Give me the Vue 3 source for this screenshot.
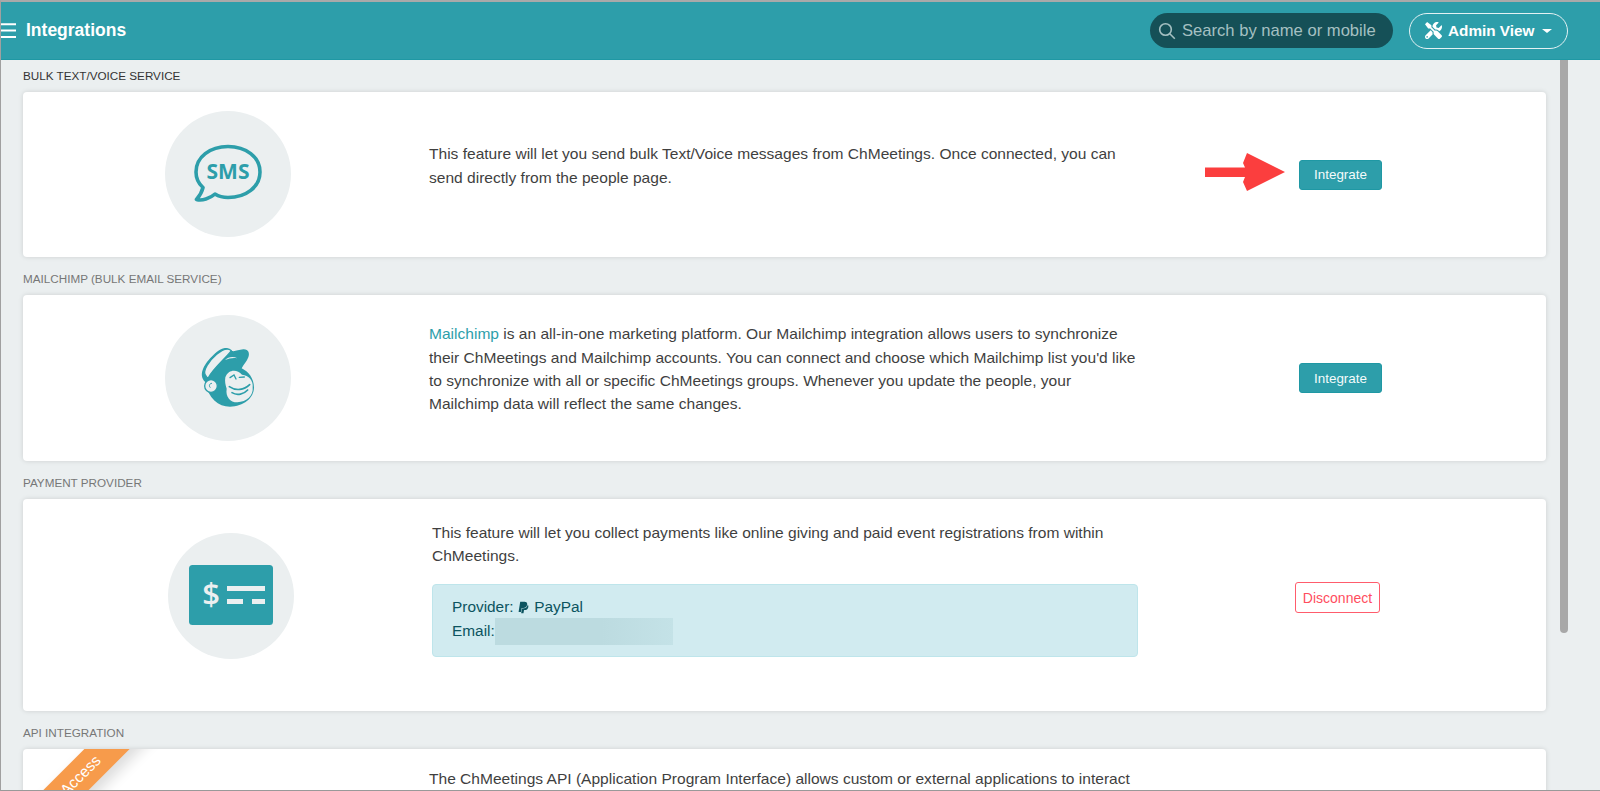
<script setup>
const tools = "M501.1 395.7L384 278.6c-23.1-23.1-57.6-27.6-85.4-13.9L192 158.1V96L64 0 0 64l96 128h62.1l106.6 106.6c-13.6 27.8-9.2 62.3 13.9 85.4l117.1 117.1c14.6 14.6 38.2 14.6 52.7 0l52.7-52.7c14.5-14.6 14.5-38.2-.1-52.7zM331.7 225c28.3 0 54.9 11 74.9 31l19.4 19.4c15.8-6.9 30.8-16.5 43.8-29.5 37.1-37.1 49.7-89.3 37.9-136.7-2.2-9-13.5-12.1-20.1-5.5l-74.4 74.4-67.9-11.3L334 98.9l74.4-74.4c6.6-6.6 3.4-17.9-5.7-20.2-47.4-11.7-99.6.9-136.6 37.9-28.5 28.5-41.9 66.1-41.2 103.6l82.1 82.1c8.1-1.9 16.5-2.9 24.7-2.9zm-103.9 82l-56.7-56.7L18.7 402.8c-25 25-25 65.5 0 90.5s65.5 25 90.5 0l123.6-123.6c-7.6-19.9-9.9-41.6-5-62.7zM64 472c-13.2 0-24-10.8-24-24 0-13.3 10.7-24 24-24s24 10.7 24 24c0 13.2-10.7 24-24 24z";
const paypal = "M111.4 295.9c-3.5 19.2-17.4 108.7-21.5 134-.3 1.8-1 2.5-3 2.5H12.3c-7.6 0-13.1-6.6-12.1-13.9L58.8 46.6c1.5-9.6 10.1-16.9 20-16.9 152.3 0 165.1-3.7 204 11.4 60.1 23.3 65.6 79.5 44 140.3-21.5 62.6-72.5 89.5-140.1 90.3-43.4.7-69.5-7-75.3 24.2zM357.1 152c-1.8-1.3-2.5-1.8-3 1.3-2 11.4-5.1 22.5-8.8 33.6-39.9 113.8-150.5 103.9-204.5 103.9-6.1 0-10.1 3.3-10.9 9.4-22.6 140.4-27.1 169.7-27.1 169.7-1 7.1 3.5 12.9 10.6 12.9h63.5c8.6 0 15.7-6.3 17.4-14.9.7-5.4-1.1 6.1 14.4-91.3 4.6-22 14.3-19.7 29.3-19.7 71 0 126.4-28.8 142.9-112.3 6.5-34.8 4.6-71.4-23.8-92.6z";
</script>

<template>
  <div class="page">
    <header class="topbar">
      <div class="brand">
        <svg class="burger" width="16" height="16" viewBox="0 0 16 16"><path d="M0 1.2h15M0 7.6h15M0 14h15" stroke="#fff" stroke-width="2" /></svg>
        <h1>Integrations</h1>
      </div>
      <div class="tools">
        <div class="search">
          <svg width="18" height="18" viewBox="0 0 18 18" fill="none" stroke="#a5c0c2" stroke-width="1.6"><circle cx="7.5" cy="7.5" r="5.8" /><path d="M11.8 11.8l5 5" /></svg>
          <span>Search by name or mobile</span>
        </div>
        <button class="admin">
          <svg width="17" height="17" viewBox="0 0 512 512" fill="#fff"><path :d="tools" /></svg>
          <span>Admin View</span>
          <i class="caret"></i>
        </button>
      </div>
    </header>

    <main class="content">
      <div class="scrollthumb"></div>

      <div class="label dark">BULK TEXT/VOICE SERVICE</div>
      <section class="card row">
        <div class="circle">
          <svg width="126" height="126" viewBox="0 0 126 126">
            <path d="M63 35.5C45 35.5 31 46 31 61C31 68 34 73 38 76.5C37 81 34.5 85 31.5 88.5C37 90 45 87.5 50 83C54 85.5 58 86.5 63 86.5C81 86.5 95 76 95 61C95 46 81 35.5 63 35.5Z" fill="none" stroke="#2d9eaa" stroke-width="3.6" stroke-linejoin="round" />
            <text x="63" y="68" class="sms">SMS</text>
          </svg>
        </div>
        <p class="desc">This feature will let you send bulk Text/Voice messages from ChMeetings. Once connected, you can send directly from the people page.</p>
        <div class="action with-arrow">
          <svg width="80" height="38" viewBox="0 0 80 38"><path d="M0 14.5H40L38 10L42 0L80 19L42 38L38 29L40 24H0Z" fill="#fb3e3e" /></svg>
          <button class="btn">Integrate</button>
        </div>
      </section>

      <div class="label">MAILCHIMP (BULK EMAIL SERVICE)</div>
      <section class="card row tall">
        <div class="circle">
          <svg width="126" height="126" viewBox="45 45 378 378">
            <path d="M165 245C145 225 160 195 185 170C205 150 225 135 240 150C250 158 262 150 280 148C295 147 300 160 295 172C290 185 282 192 275 205C295 215 312 235 312 262C312 295 280 320 240 320C205 320 175 295 165 245Z" fill="#2d9eaa" />
            <path d="M168 228C154 212 180 180 200 163C215 150 232 141 244 152C232 170 190 205 176 232C173 235 170 232 168 228Z" fill="#ebeff0" stroke="#2d9eaa" stroke-width="4" stroke-linejoin="round" />
            <circle cx="183" cy="258" r="19" fill="#ebeff0" stroke="#2d9eaa" stroke-width="4" />
            <path d="M186 250C178 250 176 258 181 263" fill="none" stroke="#2d9eaa" stroke-width="3" />
            <path d="M226 232C236 206 262 208 276 224C296 226 311 242 308 262C311 286 290 306 262 307C240 307 226 290 230 266C226 254 224 244 226 232Z" fill="#ebeff0" />
            <path d="M238 260C258 274 282 270 299 254" fill="none" stroke="#2d9eaa" stroke-width="5" stroke-linecap="round" />
            <path d="M246 278C262 288 282 282 293 270" fill="none" stroke="#2d9eaa" stroke-width="5" stroke-linecap="round" />
            <path d="M240 233L252 225L258 237M268 232L283 231" fill="none" stroke="#2d9eaa" stroke-width="4" stroke-linecap="round" />
            <path d="M225 180C235 170 250 168 262 175C250 172 238 175 225 180Z" fill="#ebeff0" />
          </svg>
        </div>
        <p class="desc"><a>Mailchimp</a> is an all-in-one marketing platform. Our Mailchimp integration allows users to synchronize their ChMeetings and Mailchimp accounts. You can connect and choose which Mailchimp list you'd like to synchronize with all or specific ChMeetings groups. Whenever you update the people, your Mailchimp data will reflect the same changes.</p>
        <div class="action">
          <button class="btn">Integrate</button>
        </div>
      </section>

      <div class="label">PAYMENT PROVIDER</div>
      <section class="card pay">
        <div class="circle">
          <svg width="126" height="126" viewBox="0 0 126 126">
            <rect x="21" y="32" width="84" height="60" rx="3.5" fill="#2d9eaa" />
            <text x="43" y="72" class="dollar">$</text>
            <rect x="59" y="53" width="38" height="5" fill="#ebeff0" />
            <rect x="59" y="66" width="16" height="5" fill="#ebeff0" />
            <rect x="84" y="66" width="13" height="5" fill="#ebeff0" />
          </svg>
        </div>
        <div class="paybody">
          <p class="desc flush">This feature will let you collect payments like online giving and paid event registrations from within ChMeetings.</p>
          <div class="alert">
            <div class="alert-line">Provider: <svg width="11" height="13" viewBox="0 0 384 512" fill="#0c5460"><path :d="paypal" /></svg> PayPal</div>
            <div class="alert-line">Email:<span class="blur"></span></div>
          </div>
        </div>
        <div class="payaction">
          <button class="btn outline">Disconnect</button>
        </div>
      </section>

      <div class="label">API INTEGRATION</div>
      <section class="card api">
        <div class="ribbon"><span>Access</span></div>
        <p class="desc">The ChMeetings API (Application Program Interface) allows custom or external applications to interact with ChMeetings data.</p>
      </section>
    </main>
  </div>
</template>

<style>
html, body { margin: 0; overflow: hidden; }
</style>

<style scoped>
.page {
  box-sizing: border-box;
  width: 1600px;
  height: 791px;
  display: flex;
  flex-direction: column;
  border-top: 2px solid #a9a9a9;
  border-left: 1px solid #a0a0a0;
  border-bottom: 1px solid #999;
  background: #ebeff0;
  font-family: "Liberation Sans", Arial, sans-serif;
  overflow: hidden;
}
.topbar {
  flex: 0 0 58px;
  box-sizing: border-box;
  display: flex;
  align-items: center;
  justify-content: space-between;
  background: #2d9eaa;
  border-bottom: 1px solid #1f98a4;
  padding: 0 32px 0 0;
  color: #fff;
}
.brand { display: flex; align-items: center; gap: 10px; }
.burger { display: block; }
h1 { margin: 0 0 0 -1px; font-size: 17.5px; font-weight: 700; }
.tools { display: flex; align-items: center; gap: 16px; }
.search {
  width: 243px;
  height: 35px;
  box-sizing: border-box;
  display: flex;
  align-items: center;
  gap: 6px;
  padding-left: 8px;
  border-radius: 18px;
  background: #155057;
  color: #a5c0c2;
  font-size: 16.6px;
}
.admin {
  width: 159px;
  height: 36px;
  box-sizing: border-box;
  display: flex;
  align-items: center;
  padding: 0 0 0 15px;
  border: 1px solid #e3f1f3;
  border-radius: 18px;
  background: transparent;
  color: #fff;
  font: 700 15.3px "Liberation Sans", Arial, sans-serif;
}
.admin span { margin-left: 6px; }
.caret {
  margin-left: 8px;
  border-top: 4px solid #fff;
  border-left: 5px solid transparent;
  border-right: 5px solid transparent;
}
.content {
  position: relative;
  flex: 1;
  min-height: 0;
  padding: 0 54px 0 22px;
  overflow: hidden;
}
.scrollthumb {
  position: absolute;
  top: 0;
  left: 1559px;
  width: 8px;
  height: 573px;
  background: #a8a8a8;
  border-radius: 0 0 4px 4px;
}
.label {
  box-sizing: border-box;
  height: 32px;
  padding-bottom: 2px;
  display: flex;
  align-items: center;
  font-size: 11.7px;
  color: #777;
}
.label.dark { color: #333; }
.card {
  position: relative;
  background: #fff;
  border-radius: 4px;
  box-shadow: 0 0 5px rgba(0, 0, 0, .13);
  margin-bottom: 6px;
  overflow: hidden;
}
.row {
  height: 165px;
  display: grid;
  grid-template-columns: 406px 716px 1fr;
  align-items: center;
}
.row.tall { height: 166px; }
.circle {
  width: 126px;
  height: 126px;
  margin: -1px 0 0 142px;
  border-radius: 50%;
  background: #ebeff0;
}
.circle svg { display: block; }
.sms {
  font: 700 21px "Open Sans", sans-serif;
  fill: #2d9eaa;
  text-anchor: middle;
}
.dollar {
  font: 600 31px "Open Sans", sans-serif;
  fill: #ebeff0;
  text-anchor: middle;
}
.desc {
  margin: 0 0 18px;
  font-size: 15.56px;
  line-height: 23.4px;
  color: #3f3f3f;
}
.desc a { color: #2d9eaa; }
.desc.flush { margin: 0; }
.action { margin-left: 154px; }
.with-arrow {
  margin-left: 60px;
  display: flex;
  align-items: center;
  gap: 14px;
}
.with-arrow svg { display: block; margin-top: -5px; }
.btn {
  display: block;
  width: 83px;
  height: 30px;
  padding: 0;
  border: 1px solid #1f98a4;
  border-radius: 3px;
  background: #2d9eaa;
  color: #f4fbfb;
  font: 13.4px "Liberation Sans", Arial, sans-serif;
}
.btn.outline {
  width: 85px;
  height: 31px;
  border-color: #ff5c6c;
  background: #fff;
  color: #ff4d5e;
  font-size: 14px;
}
.pay {
  height: 212px;
  display: grid;
  grid-template-columns: 409px 706px 1fr;
  align-items: start;
}
.pay .circle { margin: 34px 0 0 145px; }
.paybody { padding-top: 22px; }
.alert {
  box-sizing: border-box;
  height: 73px;
  margin-top: 16.2px;
  padding: 10px 19px;
  background: #d1ebf0;
  border: 1px solid #bee5eb;
  border-radius: 4px;
  color: #0c5460;
  font-size: 15.4px;
  line-height: 24px;
}
.alert-line { display: flex; align-items: center; height: 24px; white-space: pre; }
.alert-line svg { margin: 0 1px 0 0; }
.blur {
  width: 178px;
  height: 27px;
  background: linear-gradient(90deg, #bcdbe0 0 60%, #c4e2e7 100%);
}
.payaction { padding: 83px 0 0 157px; }
.api {
  height: 120px;
  display: grid;
  grid-template-columns: 406px 716px;
  padding-top: 18px;
}
.api .desc { grid-column: 2; margin: 0; }
.ribbon {
  position: absolute;
  left: -58px;
  top: 26px;
  width: 200px;
  height: 32px;
  transform: rotate(-45deg);
  background: #f79b4b;
  box-shadow: 0 8px 14px rgba(0, 0, 0, .14);
  color: #fff;
  font-size: 15.4px;
  line-height: 32px;
  text-align: center;
  text-indent: 44px;
}
</style>
